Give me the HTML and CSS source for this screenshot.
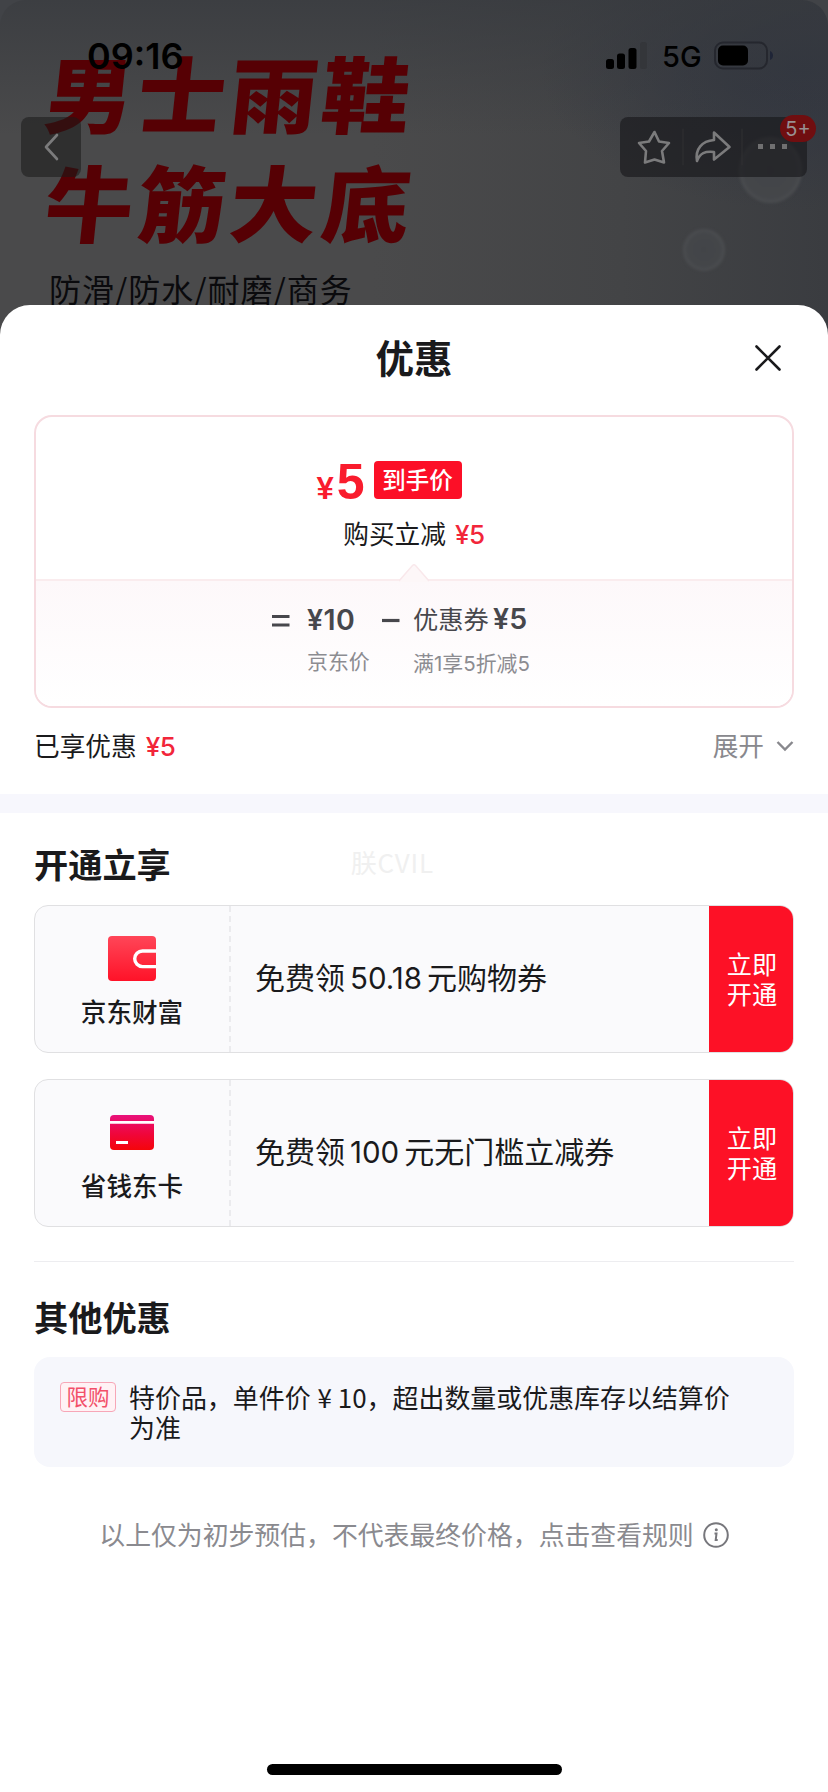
FILE: index.html
```html
<!DOCTYPE html>
<html lang="zh-CN">
<head>
<meta charset="utf-8">
<title>优惠</title>
<link rel="stylesheet" href="styles.css">
</head>
<body>
<div class="screen">
  <header class="hero">
    <div class="hero-art">
      <span class="bubble bubble-lg"></span>
      <span class="bubble bubble-sm"></span>
      <div class="hero-title">男士雨鞋</div>
      <div class="hero-title hero-title-2">牛筋大底</div>
      <div class="hero-sub">防滑/防水/耐磨/商务</div>
    </div>
    <div class="status">
      <span class="time">09:16</span>
      <svg class="signal" width="42" height="28" viewBox="0 0 42 28"><rect x="0" y="17" width="8" height="10" rx="2.5"/><rect x="11" y="11.500" width="8" height="15.500" rx="2.500"/><rect x="22.500" y="6" width="8" height="21" rx="2.500"/><rect class="dim" x="34" y="0" width="7" height="27" rx="2.500"/></svg>
      <span class="net">5G</span>
      <svg class="battery" width="60" height="30" viewBox="0 0 60 30"><rect x="1" y="1.500" width="52" height="26" rx="8" fill="none" stroke="#25272e" stroke-width="2"/><rect x="4" y="4.500" width="30" height="20" rx="5"/><path d="M56 10q3 1.500 3 4.500t-3 4.500z" fill="#1f2537"/></svg>
    </div>
    <nav class="nav">
      <div class="back"><svg width="60" height="60" viewBox="0 0 60 60"><path d="M36 18L25 30l11 12"/></svg></div>
      <div class="tools">
        <svg width="187" height="60" viewBox="0 0 187 60"><path d="M34.500 15l4.500 9.500 10 1.500-7 8 2 11.500-9.500-3-9.500 3 1-11.500-7-8 10-1.500z"/><path d="M94 15.500L109.500 30 94 42.500V35c-9-1-14 1-17 9-2-12 5-20 17-21z"/><path class="sep" d="M63 12v36M122 12v36"/><path class="dots" d="M138 27h5v5h-5zM150 27h5v5h-5zM162 27h5v5h-5z"/></svg>
        <span class="count">5+</span>
      </div>
    </nav>
  </header>

  <main class="sheet">
    <div class="sheet-head">
      <h1>优惠</h1>
      <svg class="close" width="28" height="28" viewBox="0 0 28 28"><path d="M2.500 2.500l23 23M25.500 2.500l-23 23"/></svg>
    </div>

    <section class="price-card">
      <div class="price-top">
        <div class="final"><span class="yen">¥</span><span class="amount">5</span><span class="badge">到手价</span></div>
        <div class="saving">购买立减<b>¥5</b></div>
      </div>
      <div class="formula">
        <svg class="notch" width="30" height="19" viewBox="0 0 30 19"><path d="M0 18L15 1.500 30 18v1H0z" fill="#fdf7f8"/><path d="M0 18L13.500 2.500q1.500-1.500 3 0L30 18" fill="none" stroke="#f9e8eb" stroke-width="1.500"/></svg>
        <svg class="op" width="18" height="14" viewBox="0 0 18 14"><path d="M0 2.500h17.500M0 11h17.500"/></svg>
        <div class="term term-base"><b>¥10</b><small>京东价</small></div>
        <svg class="op" width="18" height="14" viewBox="0 0 18 14"><path d="M0 6.500h17.500"/></svg>
        <div class="term term-coupon"><span class="coupon-value">优惠券<b>¥5</b></span><small>满<i>1</i>享<i>5</i>折减<i>5</i></small></div>
      </div>
    </section>

    <div class="summary">
      <span>已享优惠<b>¥5</b></span>
      <span class="expand">展开<svg width="18" height="12" viewBox="0 0 18 12"><path d="M1.500 2l7.500 7.500L16.500 2"/></svg></span>
    </div>
    <div class="band"></div>

    <section class="block">
      <div class="block-head"><h2>开通立享</h2><span class="watermark">朕CVIL</span></div>
      <article class="coupon">
        <div class="brand">
          <svg class="wallet" width="48" height="45" viewBox="0 0 48 45"><defs><linearGradient id="w" x1="0" y1="0" x2="0" y2="1"><stop offset="0" stop-color="#ff4658"/><stop offset="1" stop-color="#ff1228"/></linearGradient></defs><rect width="48" height="45" rx="4" fill="url(#w)"/><path d="M48 15H34.500a7.800 7.800 0 0 0 0 15.600H48" fill="none" stroke="#fff" stroke-width="3.400"/></svg>
          <span>京东财富</span>
        </div>
        <p>免费领<em>50.18</em>元购物券</p>
        <div class="go">立即<br>开通</div>
      </article>
      <article class="coupon">
        <div class="brand">
          <svg class="bankcard" width="44" height="35" viewBox="0 0 44 35"><defs><linearGradient id="c" x1="0" y1="0" x2="0" y2="1"><stop offset="0" stop-color="#e8117b"/><stop offset=".55" stop-color="#f0063a"/><stop offset="1" stop-color="#f5050a"/></linearGradient></defs><rect width="44" height="35" rx="4" fill="url(#c)"/><path d="M0 7.300h44M6 27.500h12" fill="none" stroke="#fff" stroke-width="2.800"/></svg>
          <span>省钱东卡</span>
        </div>
        <p>免费领<em>100</em>元无门槛立减券</p>
        <div class="go">立即<br>开通</div>
      </article>
    </section>

    <section class="other">
      <h2>其他优惠</h2>
      <div class="notice">
        <span class="tag">限购</span>
        <p>特价品，单件价<em>¥ 10</em>，超出数量或优惠库存以结算价<br>为准</p>
      </div>
    </section>

    <footer class="rules">
      <span>以上仅为初步预估，不代表最终价格，点击查看规则</span>
      <svg width="26" height="26" viewBox="0 0 26 26"><circle cx="13" cy="13" r="11.800"/><path d="M11.500 11.500h2l-.8 6.500h2"/><circle class="dot" cx="13.300" cy="7.800" r="1.500"/></svg>
    </footer>
    <div class="home"></div>
  </main>
</div>
</body>
</html>
```

FILE: styles.css
```css
* { box-sizing: border-box; }
body { margin: 0; background: #fff; color: #1a1a1c; font-family: "Noto Sans CJK SC", sans-serif; }
h1, h2, p { margin: 0; }
em, i { font-style: normal; }
.screen { width: 828px; height: 1792px; overflow: hidden; display: flex; flex-direction: column; background: #414347; }

/* dimmed product page */
.hero { position: relative; height: 305px; flex: none; }
.hero-art { position: absolute; inset: 0 0 -34px; overflow: hidden; border-radius: 26px 26px 0 0; background: linear-gradient(rgba(54,57,62,.7), transparent 40%), radial-gradient(ellipse 260px 140px at 800px 70px, #323640, transparent), linear-gradient(90deg, #4a4a4b 0, #4a4a4b 45%, #434446 75%, #3a3c40 100%); }
.hero-title { position: absolute; left: 46px; top: 36px; font-size: 83px; line-height: 110px; font-weight: 900; letter-spacing: 4px; color: #560004; transform: skewX(-6deg) scaleX(1.06); transform-origin: 0 50%; white-space: nowrap; }
.hero-title-2 { top: 145px; }
.hero-sub { position: absolute; left: 49px; top: 264px; font-size: 32px; line-height: 48px; color: #0a0a0d; white-space: nowrap; letter-spacing: .9px; }
.bubble { position: absolute; border-radius: 50%; border: 3px solid #4b4d50; filter: blur(1.5px); background: radial-gradient(#424448, #45474a); }
.bubble-lg { left: 739px; top: 137px; width: 63px; height: 66px; }
.bubble-sm { left: 683px; top: 229px; width: 42px; height: 42px; }
.status { position: relative; display: flex; align-items: center; padding: 36px 0 0 87px; height: 76px; color: #000; font-family: Inter, sans-serif; }
.time { width: 519px; font-size: 36px; font-weight: 600; line-height: 42px; }
.signal { margin-right: 14px; }
.signal .dim { fill: #34363a; }
.net { width: 52px; font-size: 29px; font-weight: 500; }
.nav { position: relative; display: flex; justify-content: space-between; padding: 41px 21px 0; }
.nav svg { display: block; fill: none; stroke: #7b7b7c; stroke-width: 2.600; stroke-linejoin: round; stroke-linecap: round; }
.back { width: 60px; height: 60px; border-radius: 8px; background: rgba(25,25,25,.55); }
.tools { position: relative; height: 60px; border-radius: 8px; background: rgba(25,25,27,.65); }
.nav .sep { stroke: #303133; stroke-width: 1; }
.nav .dots { fill: #707071; stroke: none; }
.count { position: absolute; left: 160px; top: -2px; width: 36px; height: 27px; border-radius: 14px; background: #700e10; color: #989092; font: 20px/28px Inter, sans-serif; text-align: center; }

/* bottom sheet */
.sheet { position: relative; flex: 1; display: flex; flex-direction: column; border-radius: 30px 30px 0 0; background: #fff; }
.sheet-head { display: flex; align-items: center; justify-content: flex-end; height: 106px; padding-right: 46px; margin-bottom: 4px; }
h1 { flex: 1; margin: -5px -28px 0 0; padding-left: 46px; text-align: center; font-size: 38.500px; font-weight: 700; line-height: 56px; }
.close { fill: none; stroke: #1a1a1c; stroke-width: 2.600; stroke-linecap: round; }

.price-card { margin: 0 34px; height: 293px; border: 2px solid #f6dbe0; border-radius: 18px; overflow: hidden; display: flex; flex-direction: column; }
.price-top { height: 162px; padding-top: 42px; display: flex; flex-direction: column; align-items: center; }
.final { display: flex; align-items: flex-end; height: 44px; margin-right: 50px; color: #f91c2d; font-family: "Liberation Sans", sans-serif; font-weight: 700; }
.final .yen { font-size: 31px; line-height: 28px; }
.amount { font-size: 50px; line-height: 41px; margin-left: 3px; }
.badge { margin: 0 0 4px 9px; width: 88px; height: 38px; border-radius: 4px; background: #fc0f27; color: #fff; font: 500 23.500px/36px "Noto Sans CJK SC", sans-serif; text-align: center; }
.saving { margin-top: 11px; font-size: 25.700px; line-height: 38px; }
.saving b, .summary b { margin-left: 9px; color: #f2263a; font: 500 26px/30px Inter, sans-serif; letter-spacing: -.4px; }
.formula { position: relative; flex: 1; display: flex; align-items: flex-start; padding: 21px 0 0 236px; border-top: 2px solid #faecee; background: linear-gradient(#fdf8fa, #fff 100%); color: #47474c; }
.notch { position: absolute; left: 363px; top: -18px; }
.op { margin-top: 12px; fill: none; stroke: #47474c; stroke-width: 3.200; }
.term { display: flex; flex-direction: column; font-size: 25.300px; line-height: 36px; }
.term b { font: 600 28.500px/36px Inter, sans-serif; letter-spacing: .4px; }
.term small { font-size: 20.900px; line-height: 30px; margin-top: 7px; color: #8c8c91; }
.term-base { width: 75px; margin-left: 17px; }
.term-coupon { margin-left: 13px; }
.coupon-value { height: 36px; margin-top: -2px; }
.term-coupon small { margin-top: 11px; }
.term-coupon b { margin-left: 4px; }
.term i { font-family: Inter, sans-serif; font-size: 20.500px; }

.summary { display: flex; justify-content: space-between; align-items: center; padding: 0 34px; height: 74px; font-size: 25.700px; line-height: 38px; margin-bottom: 12px; }
.expand { color: #88888d; }
.expand svg { margin: 0 0 4px 12px; fill: none; stroke: #88888d; stroke-width: 2.400; }
.band { height: 19px; background: #f7f7fd; }

.block { padding: 25px 34px 0; }
.block-head { display: flex; align-items: center; height: 50px; margin-bottom: 17px; }
h2 { font-size: 34.200px; font-weight: 700; line-height: 50px; }
.watermark { margin: -3px 0 0 180px; font-size: 26px; letter-spacing: .8px; color: #f0f0f0; }
.coupon { display: flex; height: 148px; margin-bottom: 26px; border: 1.500px solid #e0e0e2; border-radius: 14px; overflow: hidden; background: #fafafc; }
.brand { width: 196px; display: flex; flex-direction: column; align-items: center; border-right: 2px dashed #ebebee; font-size: 25.600px; line-height: 38px; font-weight: 500; }
.wallet { margin-top: 30px; }
.bankcard { margin: 35px 0 5px; }
.brand span { margin-top: 11px; }
.coupon p { flex: 1; padding-left: 24px; font-size: 30px; line-height: 141px; white-space: nowrap; }
.coupon em { font-family: Inter, sans-serif; font-size: 29.500px; margin: 0 5px; }
.go { width: 86px; margin: -2px; padding-top: 44px; background: #fd1126; color: #fff; text-align: center; font-size: 25.200px; line-height: 30px; }

.other { margin: 8px 34px 0; padding-top: 29px; border-top: 1px solid #ededf0; }
.notice { display: flex; align-items: flex-start; height: 110px; margin-top: 16px; padding: 25px 26px; border-radius: 16px; background: #f6f7fc; }
.tag { width: 56px; height: 30px; border: 1.500px solid #f7a6b7; border-radius: 4px; background: #fff2f5; color: #f2506a; font-size: 21.500px; line-height: 26px; text-align: center; }
.notice p { margin: 0 0 0 13px; font-size: 25.950px; line-height: 30px; white-space: nowrap; }
.notice em { margin-left: 7px; }
.rules { display: flex; align-items: center; justify-content: center; gap: 9px; margin-top: 48px; height: 38px; font-size: 25.850px; color: #8a8a8f; line-height: 38px; }
.rules svg { margin-top: 2px; fill: none; stroke: #77777c; stroke-width: 2; }
.rules .dot { fill: #77777c; stroke: none; }
.home { width: 295px; height: 11px; margin: auto auto 17px; border-radius: 6px; background: #000; }
```
